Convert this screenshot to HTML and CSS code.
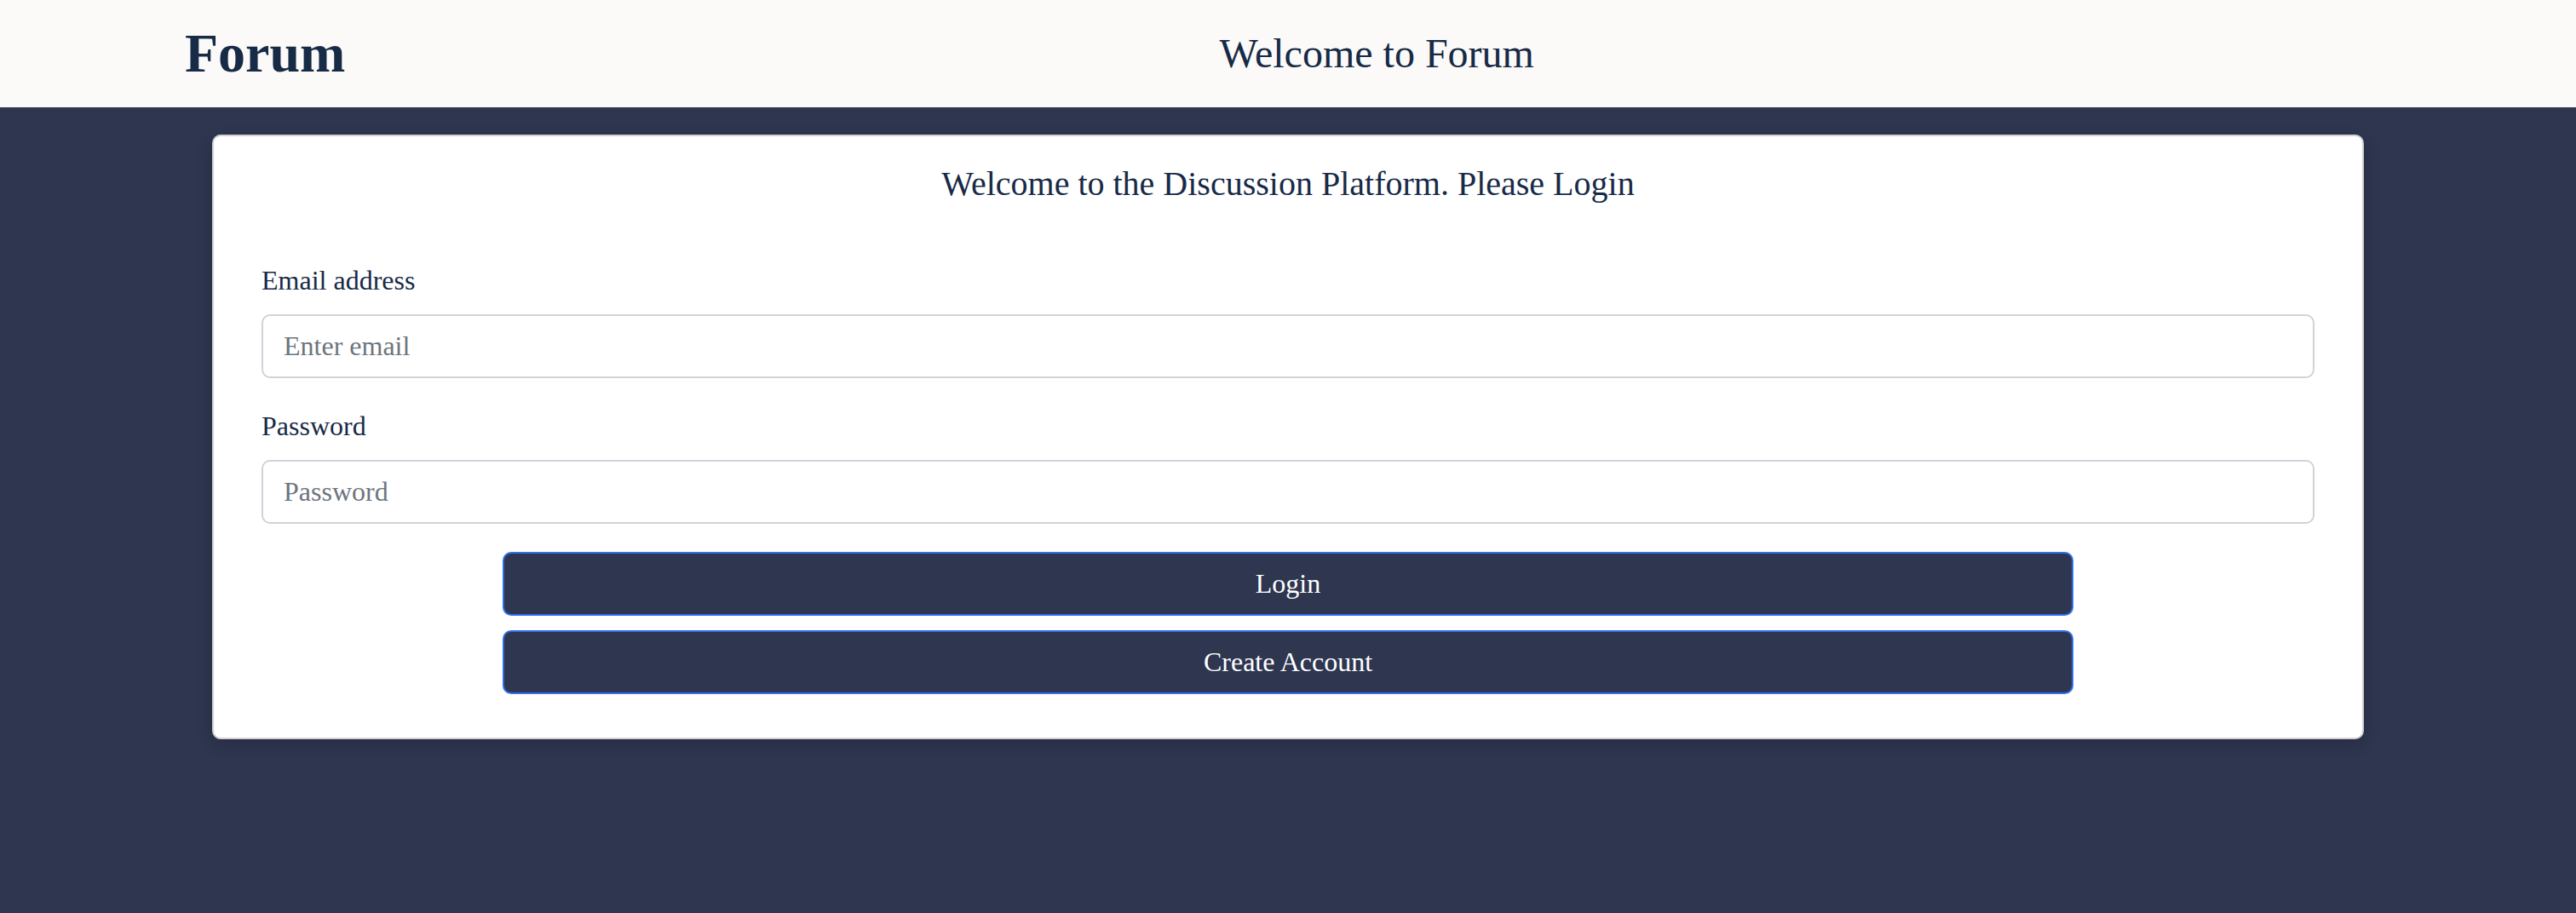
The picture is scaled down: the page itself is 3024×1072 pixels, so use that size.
FILE: index.html
```html
<!DOCTYPE html>
<html lang="en">
<head>
<meta charset="utf-8">
<title>Forum</title>
<link rel="stylesheet" href="styles.css">
</head>
<body>
<header class="topbar">
  <div class="brand">Forum</div>
  <div class="topbar-title">Welcome to Forum</div>
</header>
<main class="page">
  <section class="card">
    <h2 class="card-title">Welcome to the Discussion Platform. Please Login</h2>
    <form class="login-form">
      <div class="field">
        <label class="field-label" for="email">Email address</label>
        <input class="field-input" id="email" type="email" placeholder="Enter email">
      </div>
      <div class="field">
        <label class="field-label" for="password">Password</label>
        <input class="field-input" id="password" type="password" placeholder="Password">
      </div>
      <div class="actions">
        <button class="btn" type="button">Login</button>
        <button class="btn" type="button">Create Account</button>
      </div>
    </form>
  </section>
</main>
</body>
</html>
```
FILE: styles.css
```css
* { box-sizing: border-box; }
html, body {
  margin: 0;
  padding: 0;
}
body {
  background: #2e3650;
  font-family: "Liberation Serif", "Times New Roman", serif;
  color: #172a46;
  min-height: 1072px;
}
.topbar {
  background: #fbfaf8;
  height: 126px;
  display: flex;
  align-items: center;
  padding: 0 217px;
}
.brand {
  font-size: 64px;
  font-weight: bold;
  color: #172a46;
  margin-right: 20px;
  line-height: 1;
}
.topbar-title {
  flex: 1;
  text-align: center;
  font-size: 48px;
  color: #172a46;
  line-height: 1;
}
.page {
  padding: 32px 249px 0;
}
.card {
  background: #fff;
  border: 2px solid #d2d2d2;
  border-radius: 10px;
  box-shadow: 0 6px 18px rgba(0, 0, 0, 0.18);
  padding: 32px 56px 51px;
}
.card-title {
  margin: 0;
  text-align: center;
  font-weight: normal;
  font-size: 40px;
  color: #172a46;
}
.login-form {
  margin-top: 72px;
}
.field {
  margin-bottom: 38px;
}
.field-label {
  display: block;
  font-size: 32px;
  color: #172a46;
  margin-bottom: 21px;
}
.field-input {
  display: block;
  width: 100%;
  height: 75px;
  border: 2px solid #cfd4da;
  border-radius: 10px;
  padding: 0 24px;
  font-family: "Liberation Serif", "Times New Roman", serif;
  font-size: 32px;
  color: #172a46;
  background: #fff;
}
.field-input::placeholder {
  color: #6c757d;
}
.actions {
  display: flex;
  flex-direction: column;
  align-items: center;
  gap: 17px;
  margin-top: -5px;
}
.btn {
  width: 1844px;
  height: 75px;
  background: #2e3650;
  border: 2px solid #2f6fee;
  border-radius: 10px;
  color: #fff;
  font-family: "Liberation Serif", "Times New Roman", serif;
  font-size: 32px;
}
```
